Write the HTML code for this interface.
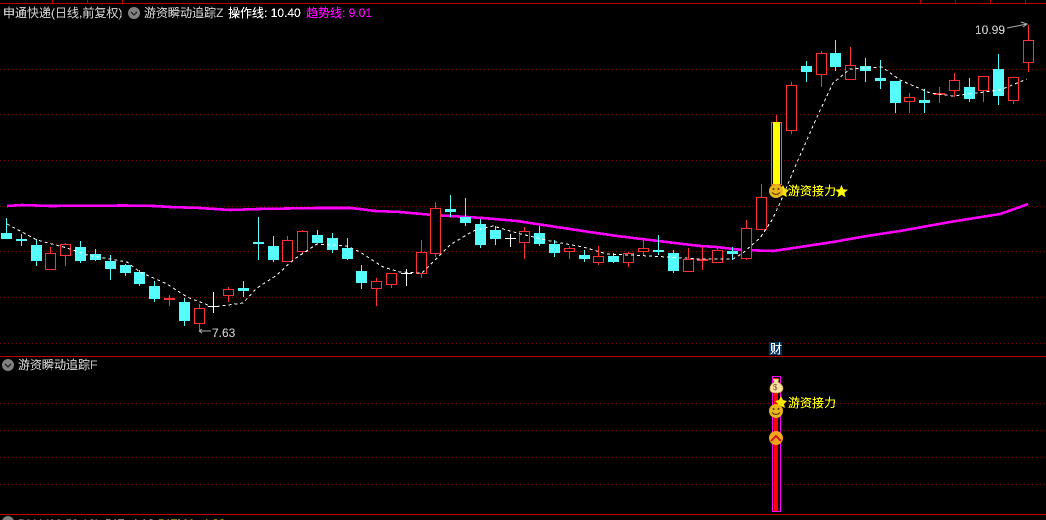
<!DOCTYPE html>
<html><head><meta charset="utf-8"><style>
html,body{margin:0;padding:0;background:#000;width:1046px;height:520px;overflow:hidden}
svg{display:block;position:absolute;left:0;top:0}
text{font-family:"Liberation Sans","WenQuanYi Zen Hei","Noto Sans CJK SC",sans-serif;font-size:12px}
</style></head><body>
<svg width="1046" height="520" viewBox="0 0 1046 520">
<defs><filter id="a" filterUnits="userSpaceOnUse" x="0" y="0" width="1046" height="520" color-interpolation-filters="sRGB"><feComponentTransfer><feFuncA type="discrete" tableValues="0 1 1"/></feComponentTransfer></filter></defs>
<rect width="1046" height="520" fill="#000"/>
<path d="M0 69.500H1046M0 114.500H1046M0 160.500H1046M0 206.500H1046M0 251.500H1046M0 297.500H1046M0 343.500H1046M0 403.500H1046M0 430.500H1046M0 457.500H1046M0 484.500H1046" stroke="#7a0000" stroke-width="1" stroke-dasharray="1 3" fill="none"/>
<g shape-rendering="crispEdges">
<path d="M0 3.500H1046M0 356.500H1046M0 514.500H1046" stroke="#c00000" fill="none"/>
<path d="M52.500 0V3M87.500 0V3M122.500 0V3M920.500 0V3M955.500 0V3M990.500 0V3M1025.500 0V3" stroke="#c00000" fill="none"/>
<!-- magenta average -->
<polyline fill="none" stroke="#ff00ff" stroke-width="2.600" points="7,206 22,205 50,206 125,205.500 155,206 170,207 200,208 230,210 258,209 317,208 350,208 360,209 375,211 400,212 433,215 450,216 483,218 517,221 550,226 583,231 617,236 650,240 683,244 700,246 717,247 733,249 743,250 773,251 800,247 833,242 867,236 900,231 950,222 1000,214 1020,207 1028,204"/>
<!-- red wicks -->
<path stroke="#ff3232" fill="none" d="M50.500 247V270M65.500 243V266M169.500 295V306M199.500 304V330M228.500 287V302M287.500 236V262M302.500 230V253M376.500 278V306M391.500 273V288M421.500 240V278M435.500 202V257M524.500 227V259M569.500 246V259M598.500 246V265M628.500 252V267M643.500 240V256M688.500 248V272M702.500 247V270M717.500 247V263M746.500 220V260M761.500 184V229M776.500 115V122M791.500 82V134M821.500 51V87M850.500 47V79M909.500 93V113M939.500 87V103M954.500 73V97M983.500 76V102M1013.500 77V104M1028.500 25V72"/>
<!-- red bodies -->
<g fill="#000" stroke="#ff3232">
<rect x="45.500" y="253.500" width="10" height="16"/><rect x="60.500" y="244.500" width="10" height="11"/><rect x="194.500" y="308.500" width="10" height="15"/><rect x="223.500" y="289.500" width="10" height="6"/><rect x="282.500" y="240.500" width="10" height="21"/><rect x="297.500" y="231.500" width="10" height="20"/><rect x="371.500" y="281.500" width="10" height="7"/><rect x="386.500" y="273.500" width="10" height="11"/><rect x="416.500" y="252.500" width="10" height="21"/><rect x="430.500" y="208.500" width="10" height="45"/><rect x="519.500" y="231.500" width="10" height="11"/><rect x="564.500" y="248.500" width="10" height="3"/><rect x="593.500" y="256.500" width="10" height="6"/><rect x="623.500" y="253.500" width="10" height="9"/><rect x="638.500" y="248.500" width="10" height="3"/><rect x="683.500" y="259.500" width="10" height="12"/><rect x="712.500" y="250.500" width="10" height="12"/><rect x="741.500" y="228.500" width="10" height="30"/><rect x="756.500" y="197.500" width="10" height="32"/><rect x="786.500" y="85.500" width="10" height="45"/><rect x="816.500" y="53.500" width="10" height="21"/><rect x="845.500" y="65.500" width="10" height="14"/><rect x="904.500" y="97.500" width="10" height="4"/><rect x="949.500" y="80.500" width="10" height="10"/><rect x="978.500" y="76.500" width="10" height="14"/><rect x="1008.500" y="77.500" width="10" height="23"/><rect x="1023.500" y="40.500" width="10" height="22"/>
</g>
<path fill="#ff3232" d="M164 298h11v2h-11zM697 259h11v2h-11zM934 93h11v2h-11z"/>
<!-- yellow bar -->
<rect x="771.500" y="122.500" width="10" height="62" fill="#000" stroke="#ff5a1e"/>
<rect x="773" y="122" width="7" height="62" fill="#ffff00"/>
<!-- white doji -->
<path stroke="#fff" fill="none" d="M213.500 292V313M208 306.500H219M406.500 269V286M401 273.500H412M510.500 234V247M505 238.500H516"/>
<!-- cyan wicks -->
<path stroke="#54fcfc" fill="none" d="M6.500 218V239M21.500 234V246M36.500 239V266M80.500 241V263M95.500 249V261M110.500 255V280M125.500 264V276M139.500 270V286M154.500 281V302M184.500 298V326M243.500 281V297M258.500 217V260M273.500 236V262M317.500 230V243M332.500 233V253M347.500 238V260M361.500 265V289M450.500 195V217M465.500 198V226M480.500 219V248M495.500 226V245M539.500 226V246M554.500 240V257M584.500 250V262M613.500 253V263M658.500 235V255M673.500 250V273M732.500 247V260M806.500 61V82M835.500 40V71M865.500 58V82M880.500 60V89M895.500 81V113M924.500 89V113M969.500 78V102M998.500 54V105"/>
<!-- cyan bodies -->
<path fill="#54fcfc" d="M1 233h11v6h-11zM16 239h11v2h-11zM31 245h11v16h-11zM75 247h11v14h-11zM90 254h11v6h-11zM105 261h11v8h-11zM120 265h11v8h-11zM134 272h11v12h-11zM149 286h11v13h-11zM179 302h11v19h-11zM238 288h11v3h-11zM253 242h11v2h-11zM268 246h11v14h-11zM312 235h11v8h-11zM327 238h11v12h-11zM342 248h11v11h-11zM356 271h11v12h-11zM445 209h11v3h-11zM460 217h11v6h-11zM475 224h11v21h-11zM490 230h11v9h-11zM534 233h11v11h-11zM549 244h11v9h-11zM579 255h11v4h-11zM608 256h11v6h-11zM653 250h11v2h-11zM668 253h11v18h-11zM727 251h11v3h-11zM801 66h11v6h-11zM830 53h11v14h-11zM860 66h11v5h-11zM875 78h11v3h-11zM890 81h11v22h-11zM919 100h11v3h-11zM964 87h11v12h-11zM993 69h11v27h-11z"/>
<!-- white dashed -->
<polyline fill="none" stroke="#fff" stroke-dasharray="3 3" points="7,224 37,240 67,248 87,255 127,262 140,272 167,284 187,297 213,307 243,303 257,288 277,275 293,260 317,244 347,246 360,252 383,267 400,272 422,273 450,245 473,231 493,226 517,233 550,241 583,247 607,254 650,256 700,259 733,259 743,253 760,238 772,220 780,203 798,160 817,117 833,83 850,69 882,67 900,80 930,93 953,96 1000,90 1027,79"/>
<!-- lower pane bar -->
<rect x="772.500" y="376.500" width="8" height="135" fill="#000" stroke="#ff00ff"/>
<rect x="774" y="378" width="4" height="133" fill="#ff0000"/>
<rect x="769" y="342" width="13" height="13" fill="#003366"/>
</g>
<!-- labels -->
<path d="M199 331H211M199 331l3-2M199 331l3 2" stroke="#b0b0b0" fill="none"/>
<path d="M1007 28L1027 24M1021 22l6 2-4 3" stroke="#b0b0b0" fill="none"/>
<circle cx="134" cy="13" r="6" fill="#808080"/><path d="M131 12l3 3 3-3" stroke="#222" stroke-width="1.300" fill="none"/>
<circle cx="8" cy="365" r="6" fill="#808080"/><path d="M5 364l3 3 3-3" stroke="#222" stroke-width="1.300" fill="none"/>
<circle cx="8" cy="522" r="6" fill="#808080"/>
<!-- upper signal -->
<polygon points="783,185 785,189 789,190 786,193 787,197 783,195 779,197 780,193 777,190 781,189" fill="#ffe600"/>
<circle cx="776" cy="191" r="7" fill="#e8b61c"/>
<circle cx="773.500" cy="189" r="1" fill="#5a3a00"/><circle cx="778.500" cy="189" r="1" fill="#5a3a00"/>
<path d="M772 192.500q4 4 8 0" stroke="#5a3a00" fill="none"/>
<polygon points="841.500,185 843.300,189.300 848,189.700 844.400,192.700 845.500,197.200 841.500,194.800 837.500,197.200 838.600,192.700 835,189.700 839.700,189.300" fill="#ffff00"/>
<!-- lower signal -->
<path d="M773 379h6l-1 3q5 3 5 6 0 5-7 5t-6-5q0-3 4-6z" fill="#f4e4a0" stroke="#c89030" stroke-width="0.700"/>
<polygon points="781,396 783,400 787,401 784,404 785,408 781,406 777,408 778,404 775,401 779,400" fill="#ffe600"/>
<circle cx="776" cy="411" r="7" fill="#e8b61c"/>
<circle cx="773.500" cy="409" r="1" fill="#5a3a00"/><circle cx="778.500" cy="409" r="1" fill="#5a3a00"/>
<path d="M772 412.500q4 4 8 0" stroke="#5a3a00" fill="none"/>
<circle cx="776" cy="438" r="7" fill="#f2a61c"/>
<path d="M771 441l5-5 5 5" stroke="#c81e1e" stroke-width="2" fill="none"/>
<text x="773" y="390" fill="#8a4a3a" style="font-size:8px">$</text>
<g filter="url(#a)">
<text x="212" y="337" fill="#c0c0c0">7.63</text>
<text x="975" y="34" fill="#c0c0c0">10.99</text>
<text x="3" y="17" fill="#c0c0c0">申通快递(日线,前复权)</text>
<text x="144" y="17" fill="#c0c0c0">游资瞬动追踪Z</text>
<text x="228" y="17" fill="#ffffff">操作线: 10.40</text>
<text x="306" y="17" fill="#ff00ff">趋势线: 9.01</text>
<text x="18" y="369" fill="#c0c0c0">游资瞬动追踪F</text>
<text x="18" y="528" fill="#c0c0c0">DMA(10,50,10)</text>
<text x="105" y="528" fill="#ffffff">DIF: 4.10</text>
<text x="158" y="528" fill="#ffff00">DIFMA: 4.20</text>
<text x="770" y="353" fill="#ffffff">财</text>
<text x="788" y="195" fill="#ffff00">游资接力</text>
<text x="788" y="407" fill="#ffff00">游资接力</text>
</g>
</svg>
</body></html>
